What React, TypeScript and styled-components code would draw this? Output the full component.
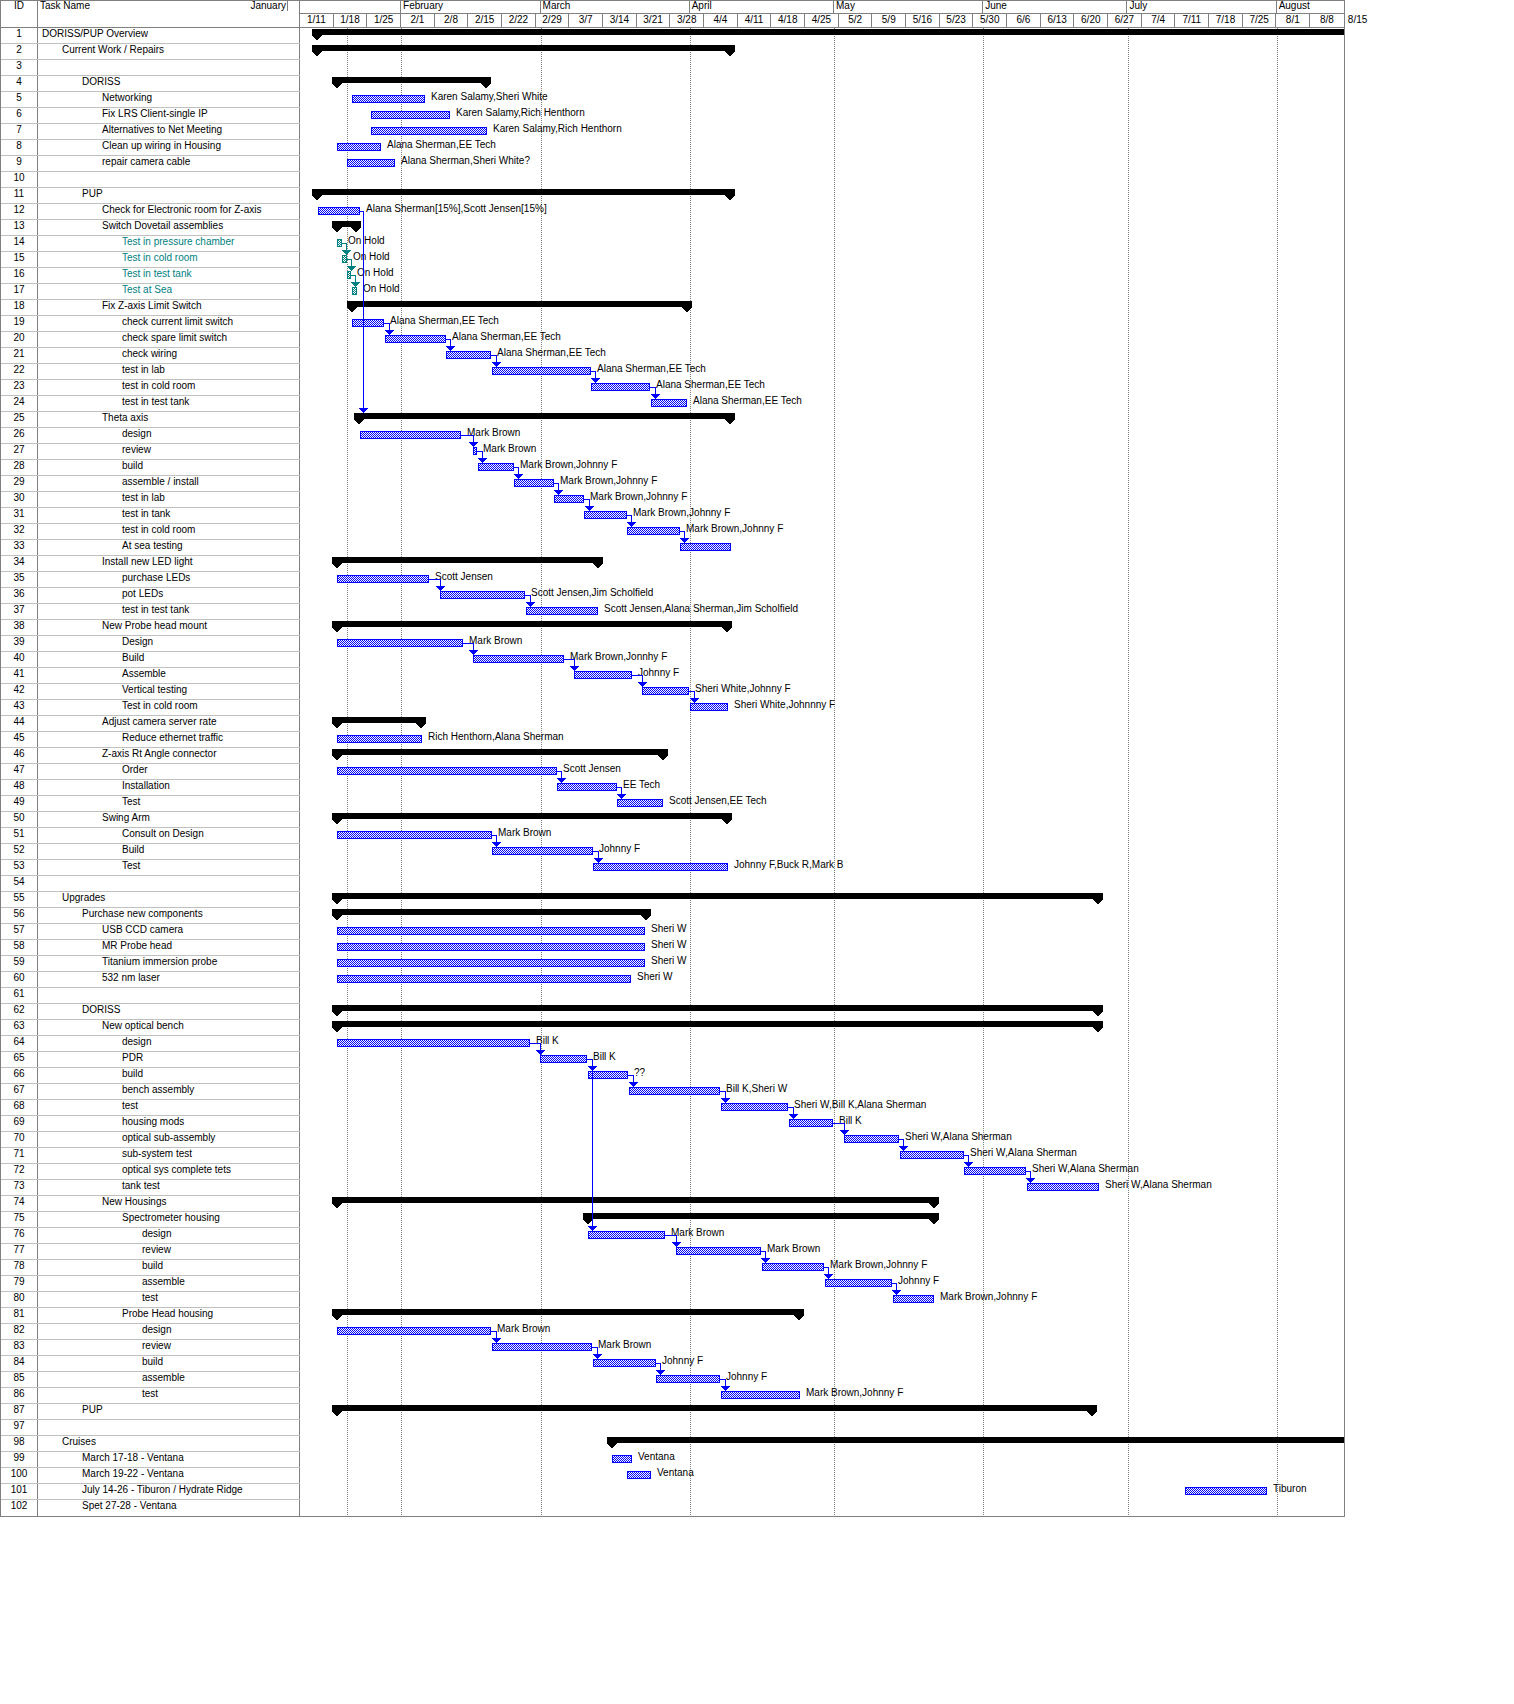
import React from 'react';
import styled, { createGlobalStyle } from 'styled-components';

const GRID = '#808080';
const ROWLINE = '#c0c0c0';
const BLUE = '#0000ff';
const TEAL = '#008080';
const CHART_X = 300;
const CHART_W = 1044;
const ROW_H = 16;
const DAY = CHART_W / 217;

type Row = {
  id: number;
  name: string;
  lvl: number;
  kind?: 'sum' | 'task';
  x1?: number;
  x2?: number;
  label?: string;
  teal?: boolean;
  clip?: boolean;
};

const S = (id: number, name: string, lvl: number, x1: number, x2: number, clip = false): Row => ({
  id, name, lvl, kind: 'sum', x1, x2, clip,
});
const T = (id: number, name: string, lvl: number, x1: number, x2: number, label?: string, teal = false): Row => ({
  id, name, lvl, kind: 'task', x1, x2, label, teal,
});
const E = (id: number, name = '', lvl = 0): Row => ({ id, name, lvl });

const rows: Row[] = [
  S(1, 'DORISS/PUP Overview', 0, 311.7, 1344, true),
  S(2, 'Current Work / Repairs', 1, 311.7, 735),
  E(3),
  S(4, 'DORISS', 2, 332.3, 491),
  T(5, 'Networking', 3, 352.3, 424.7, 'Karen Salamy,Sheri White'),
  T(6, 'Fix LRS Client-single IP', 3, 371.3, 449.7, 'Karen Salamy,Rich Henthorn'),
  T(7, 'Alternatives to Net Meeting', 3, 371.3, 486.7, 'Karen Salamy,Rich Henthorn'),
  T(8, 'Clean up wiring in Housing', 3, 337.3, 380.7, 'Alana Sherman,EE Tech'),
  T(9, 'repair camera cable', 3, 347, 395, 'Alana Sherman,Sheri White?'),
  E(10),
  S(11, 'PUP', 2, 311.7, 735),
  T(12, 'Check for Electronic room for Z-axis', 3, 318, 359.5, 'Alana Sherman[15%],Scott Jensen[15%]'),
  S(13, 'Switch Dovetail assemblies', 3, 332.4, 360.6),
  T(14, 'Test in pressure chamber', 4, 337.3, 342.3, 'On Hold', true),
  T(15, 'Test in cold room', 4, 342.3, 347, 'On Hold', true),
  T(16, 'Test in test tank', 4, 346.7, 351.3, 'On Hold', true),
  T(17, 'Test at Sea', 4, 352, 356.7, 'On Hold', true),
  S(18, 'Fix Z-axis Limit Switch', 3, 346.7, 691.5),
  T(19, 'check current limit switch', 4, 352.4, 384.2, 'Alana Sherman,EE Tech'),
  T(20, 'check spare limit switch', 4, 385.2, 445.9, 'Alana Sherman,EE Tech'),
  T(21, 'check wiring', 4, 446.3, 491.2, 'Alana Sherman,EE Tech'),
  T(22, 'test in lab', 4, 492.3, 590.5, 'Alana Sherman,EE Tech'),
  T(23, 'test in cold room', 4, 591.2, 650.4, 'Alana Sherman,EE Tech'),
  T(24, 'test in test tank', 4, 651.1, 686.5, 'Alana Sherman,EE Tech'),
  S(25, 'Theta axis', 3, 353.8, 735),
  T(26, 'design', 4, 360.3, 460.7, 'Mark Brown'),
  T(27, 'review', 4, 473.4, 477.4, 'Mark Brown'),
  T(28, 'build', 4, 477.7, 513.7, 'Mark Brown,Johnny F'),
  T(29, 'assemble / install', 4, 514.1, 553.7, 'Mark Brown,Johnny F'),
  T(30, 'test in lab', 4, 554.4, 584, 'Mark Brown,Johnny F'),
  T(31, 'test in tank', 4, 584.4, 626.9, 'Mark Brown,Johnny F'),
  T(32, 'test in cold room', 4, 627.2, 679.7, 'Mark Brown,Johnny F'),
  T(33, 'At sea testing', 4, 680.4, 730.7),
  S(34, 'Install new LED light', 3, 332.4, 602.9),
  T(35, 'purchase LEDs', 4, 337.4, 428.8, 'Scott Jensen'),
  T(36, 'pot LEDs', 4, 439.5, 525.1, 'Scott Jensen,Jim Scholfield'),
  T(37, 'test in test tank', 4, 525.5, 597.6, 'Scott Jensen,Alana Sherman,Jim Scholfield'),
  S(38, 'New Probe head mount', 3, 332.4, 732.1),
  T(39, 'Design', 4, 337.4, 462.7, 'Mark Brown'),
  T(40, 'Build', 4, 473.4, 563.7, 'Mark Brown,Jonnhy F'),
  T(41, 'Assemble', 4, 574.4, 631.5, 'Johnny F'),
  T(42, 'Vertical testing', 4, 642.2, 689.3, 'Sheri White,Johnny F'),
  T(43, 'Test in cold room', 4, 690, 727.5, 'Sheri White,Johnnny F'),
  S(44, 'Adjust camera server rate', 3, 332.4, 426.3),
  T(45, 'Reduce ethernet traffic', 4, 337.4, 422, 'Rich Henthorn,Alana Sherman'),
  S(46, 'Z-axis Rt Angle connector', 3, 332.4, 667.9),
  T(47, 'Order', 4, 337.4, 556.5, 'Scott Jensen'),
  T(48, 'Installation', 4, 557.3, 616.9, 'EE Tech'),
  T(49, 'Test', 4, 617.2, 662.5, 'Scott Jensen,EE Tech'),
  S(50, 'Swing Arm', 3, 332.4, 732.1),
  T(51, 'Consult on Design', 4, 337.4, 491.9, 'Mark Brown'),
  T(52, 'Build', 4, 492.3, 593, 'Johnny F'),
  T(53, 'Test', 4, 593, 727.5, 'Johnny F,Buck R,Mark B'),
  E(54),
  S(55, 'Upgrades', 1, 331.9, 1103),
  S(56, 'Purchase new components', 2, 331.9, 650.6),
  T(57, 'USB CCD camera', 3, 336.8, 645.2, 'Sheri W'),
  T(58, 'MR Probe head', 3, 336.8, 645.2, 'Sheri W'),
  T(59, 'Titanium immersion probe', 3, 336.8, 645.2, 'Sheri W'),
  T(60, '532 nm laser', 3, 336.8, 630.9, 'Sheri W'),
  E(61),
  S(62, 'DORISS', 2, 331.9, 1103),
  S(63, 'New optical bench', 3, 331.9, 1103),
  T(64, 'design', 4, 336.8, 529.6, 'Bill K'),
  T(65, 'PDR', 4, 539.5, 587.1, 'Bill K'),
  T(66, 'build', 4, 588.2, 628.2, '??'),
  T(67, 'bench assembly', 4, 629.3, 720.2, 'Bill K,Sheri W'),
  T(68, 'test', 4, 720.7, 788.1, 'Sheri W,Bill K,Alana Sherman'),
  T(69, 'housing mods', 4, 788.6, 833, 'Bill K'),
  T(70, 'optical sub-assembly', 4, 844, 898.7, 'Sheri W,Alana Sherman'),
  T(71, 'sub-system test', 4, 899.8, 963.9, 'Sheri W,Alana Sherman'),
  T(72, 'optical sys complete tets', 4, 964.4, 1025.8, 'Sheri W,Alana Sherman'),
  T(73, 'tank test', 4, 1026.9, 1098.6, 'Sheri W,Alana Sherman'),
  S(74, 'New Housings', 3, 331.9, 938.7),
  S(75, 'Spectrometer housing', 4, 582.7, 938.7),
  T(76, 'design', 5, 588.2, 664.9, 'Mark Brown'),
  T(77, 'review', 5, 675.8, 760.7, 'Mark Brown'),
  T(78, 'build', 5, 761.8, 823.7, 'Mark Brown,Johnny F'),
  T(79, 'assemble', 5, 824.8, 891.6, 'Johnny F'),
  T(80, 'test', 5, 892.7, 933.8, 'Mark Brown,Johnny F'),
  S(81, 'Probe Head housing', 4, 331.9, 803.9),
  T(82, 'design', 5, 336.8, 491.3, 'Mark Brown'),
  T(83, 'review', 5, 491.8, 592, 'Mark Brown'),
  T(84, 'build', 5, 593.1, 655.6, 'Johnny F'),
  T(85, 'assemble', 5, 656.1, 720.2, 'Johnny F'),
  T(86, 'test', 5, 720.7, 799.6, 'Mark Brown,Johnny F'),
  S(87, 'PUP', 2, 331.9, 1097),
  E(97),
  S(98, 'Cruises', 1, 607.4, 1344, true),
  T(99, 'March 17-18 - Ventana', 2, 611.9, 631.7, 'Ventana'),
  T(100, 'March 19-22 - Ventana', 2, 627.3, 651.1, 'Ventana'),
  T(101, 'July 14-26 - Tiburon / Hydrate Ridge', 2, 1184.6, 1266.5, 'Tiburon'),
  E(102, 'Spet 27-28 - Ventana', 2),
];

// finish-to-start links [pred, succ, forced x of the elbow]
const links: Array<[number, number, number?]> = [
  [12, 25, 363],
  [14, 15], [15, 16], [16, 17],
  [19, 20], [20, 21], [21, 22], [22, 23], [23, 24],
  [26, 27], [27, 28], [28, 29], [29, 30], [30, 31], [31, 32], [32, 33],
  [35, 36], [36, 37],
  [39, 40], [40, 41], [41, 42], [42, 43],
  [47, 48], [48, 49],
  [51, 52], [52, 53],
  [64, 65], [65, 66], [66, 67], [67, 68], [68, 69], [69, 70], [70, 71], [71, 72], [72, 73],
  [65, 76],
  [76, 77], [77, 78], [78, 79], [79, 80],
  [82, 83], [83, 84], [84, 85], [85, 86],
];

const MONTHS: Array<[string, number]> = [
  ['', 21], ['February', 29], ['March', 31], ['April', 30],
  ['May', 31], ['June', 30], ['July', 31], ['August', 14],
];

const WEEKS = Array.from({ length: 31 }, (_, i) => {
  const d = new Date(2004, 0, 11 + i * 7);
  return `${d.getMonth() + 1}/${d.getDate()}`;
});

// status date + month starts, in days from 1/11
const GRID_DAYS = [9.7, 21, 50, 81, 111, 142, 172, 203];

const byId = (id: number) => rows.find((r) => r.id === id)!;
const top = (id: number) => rows.findIndex((r) => r.id === id) * ROW_H;
const px = (x: number) => Math.round(x) - CHART_X;

const GlobalStyle = createGlobalStyle`
  body {
    margin: 0;
    background: #fff;
  }
`;

const Frame = styled.div`
  display: flex;
  width: max-content;
  border-top: 1px solid ${GRID};
  border-left: 1px solid ${GRID};
  border-bottom: 1px solid ${GRID};
  font-family: "Liberation Sans", Arial, sans-serif;
  font-size: 10px;
  color: #000;
`;

const Side = styled.div`
  display: flex;
  flex-direction: column;
  width: 299px;
`;

const SideHead = styled.div`
  display: flex;
  height: 27px;
  box-sizing: border-box;
  border-bottom: 1px solid ${GRID};
`;

const IdHead = styled.div`
  flex: 0 0 37px;
  box-sizing: border-box;
  border-right: 1px solid ${GRID};
  text-align: center;
  line-height: 10px;
`;

const TaskHead = styled.div`
  flex: 0 0 262px;
  box-sizing: border-box;
  border-right: 1px solid ${GRID};
  display: flex;
  justify-content: space-between;
  align-items: flex-start;
  padding-left: 2px;
  line-height: 10px;
`;

const JanuaryTag = styled.span`
  height: 10px;
  padding-right: 1px;
  margin-right: 11px;
  border-right: 1px solid ${GRID};
  background: #fff;
`;

const TableRow = styled.div`
  display: flex;
  height: 16px;
  box-sizing: border-box;
  border-bottom: 1px solid ${ROWLINE};

  &:last-child {
    border-bottom: none;
  }
`;

const IdCell = styled.div`
  flex: 0 0 37px;
  box-sizing: border-box;
  border-right: 1px solid ${GRID};
  text-align: center;
  line-height: 11px;
`;

const NameCell = styled.div<{ $lvl: number; $teal?: boolean }>`
  flex: 0 0 262px;
  box-sizing: border-box;
  border-right: 1px solid ${GRID};
  padding-left: ${(p) => 4 + p.$lvl * 20}px;
  line-height: 11px;
  white-space: nowrap;
  overflow: hidden;
  color: ${(p) => (p.$teal ? TEAL : '#000')};
`;

const ChartCol = styled.div`
  display: flex;
  flex-direction: column;
  width: ${CHART_W + 1}px;
  box-sizing: border-box;
  border-right: 1px solid ${GRID};
`;

const TopTier = styled.div`
  display: flex;
  height: 13px;
  box-sizing: border-box;
  border-bottom: 1px solid ${GRID};
`;

const MonthCell = styled.div<{ $w: number }>`
  flex: 0 0 ${(p) => p.$w}px;
  box-sizing: border-box;
  border-right: 1px solid ${GRID};
  padding-left: 2px;
  line-height: 10px;
  white-space: nowrap;
  overflow: hidden;

  &:last-child {
    border-right: none;
  }
`;

const BottomTier = styled.div`
  display: flex;
  height: 14px;
  box-sizing: border-box;
  border-bottom: 1px solid ${GRID};
`;

const WeekCell = styled.div<{ $w: number; $last?: boolean }>`
  flex: 0 0 ${(p) => p.$w}px;
  box-sizing: border-box;
  border-right: ${(p) => (p.$last ? 'none' : `1px solid ${GRID}`)};
  text-align: center;
  line-height: 12px;
  white-space: nowrap;
`;

const TailLabel = styled.div`
  flex: 0 0 auto;
  padding-left: 4px;
  line-height: 12px;
  white-space: nowrap;
`;

const Bars = styled.svg`
  display: block;
  font-family: "Liberation Sans", Arial, sans-serif;
  font-size: 10px;

  rect, line, polygon, path {
    shape-rendering: crispEdges;
  }
`;

const Summary = ({ r }: { r: Row }) => {
  const t = top(r.id);
  const x1 = px(r.x1!);
  const x2 = r.clip ? CHART_W : px(r.x2!);
  const cap = (x: number) =>
    `${x},${t + 7} ${x + 10},${t + 7} ${x + 10},${t + 8} ${x + 5},${t + 12} ${x},${t + 8}`;
  return (
    <g fill="#000">
      <rect x={x1} y={t + 1} width={x2 - x1} height={6} />
      <polygon points={cap(x1)} />
      {!r.clip && <polygon points={cap(x2 - 10)} />}
    </g>
  );
};

const Task = ({ r }: { r: Row }) => {
  const t = top(r.id);
  const x1 = px(r.x1!);
  const x2 = px(r.x2!);
  const c = r.teal ? TEAL : BLUE;
  return (
    <g>
      <rect
        x={x1 + 0.5}
        y={t + 3.5}
        width={Math.max(x2 - x1 - 1, 2)}
        height={7}
        fill={r.teal ? 'url(#hatchTeal)' : 'url(#hatch)'}
        stroke={c}
      />
      {r.label && (
        <text x={x2 + 6} y={t + 8}>
          {r.label}
        </text>
      )}
    </g>
  );
};

const Link = ({ from, to, at }: { from: number; to: number; at?: number }) => {
  const p = byId(from);
  const s = byId(to);
  const c = p.teal ? TEAL : BLUE;
  const vxRaw = at ?? (p.teal ? Math.max(p.x2! + 3.5, s.x1! + 2.5) : Math.max(s.x1!, p.x2! + 4.5));
  const vx = px(vxRaw) + 0.5;
  const y0 = top(from) + 7.5;
  const tip = top(to) + (s.kind === 'sum' ? 1 : 3);
  const base = tip - 5;
  return (
    <g>
      <path d={`M${px(p.x2!)} ${y0}H${vx}V${base}`} fill="none" stroke={c} />
      <polygon points={`${vx - 4.5},${base} ${vx + 4.5},${base} ${vx},${tip}`} fill={c} />
    </g>
  );
};

const GanttBars = () => {
  const h = rows.length * ROW_H;
  return (
    <Bars width={CHART_W} height={h}>
      <defs>
        <pattern id="hatch" width="2" height="2" patternUnits="userSpaceOnUse">
          <rect width="2" height="2" fill="#fff" />
          <rect width="1" height="1" fill={BLUE} />
          <rect x="1" y="1" width="1" height="1" fill={BLUE} />
        </pattern>
        <pattern id="hatchTeal" width="2" height="2" patternUnits="userSpaceOnUse">
          <rect width="2" height="2" fill="#fff" />
          <rect width="1" height="1" fill={TEAL} />
          <rect x="1" y="1" width="1" height="1" fill={TEAL} />
        </pattern>
      </defs>
      {GRID_DAYS.map((d) => {
        const x = Math.round(d * DAY) + 0.5;
        return <line key={d} x1={x} x2={x} y1={0} y2={h} stroke={GRID} strokeDasharray="1 1" />;
      })}
      {rows.map((r) =>
        r.kind === 'sum' ? <Summary key={r.id} r={r} /> : r.kind === 'task' ? <Task key={r.id} r={r} /> : null
      )}
      {links.map(([a, b, at]) => (
        <Link key={`${a}-${b}`} from={a} to={b} at={at} />
      ))}
    </Bars>
  );
};

const App = () => {
  const weekW = DAY * 7;
  return (
    <>
      <GlobalStyle />
      <Frame>
        <Side>
          <SideHead>
            <IdHead>ID</IdHead>
            <TaskHead>
              <span>Task Name</span>
              <JanuaryTag>January</JanuaryTag>
            </TaskHead>
          </SideHead>
          {rows.map((r) => (
            <TableRow key={r.id}>
              <IdCell>{r.id}</IdCell>
              <NameCell $lvl={r.lvl} $teal={r.teal}>
                {r.name}
              </NameCell>
            </TableRow>
          ))}
        </Side>
        <ChartCol>
          <TopTier>
            {MONTHS.map(([m, days], i) => (
              <MonthCell key={i} $w={days * DAY}>
                {m}
              </MonthCell>
            ))}
          </TopTier>
          <BottomTier>
            {WEEKS.map((w, i) => (
              <WeekCell key={w} $w={weekW} $last={i === WEEKS.length - 1}>
                {w}
              </WeekCell>
            ))}
            <TailLabel>8/15</TailLabel>
          </BottomTier>
          <GanttBars />
        </ChartCol>
      </Frame>
    </>
  );
};

export default App;
